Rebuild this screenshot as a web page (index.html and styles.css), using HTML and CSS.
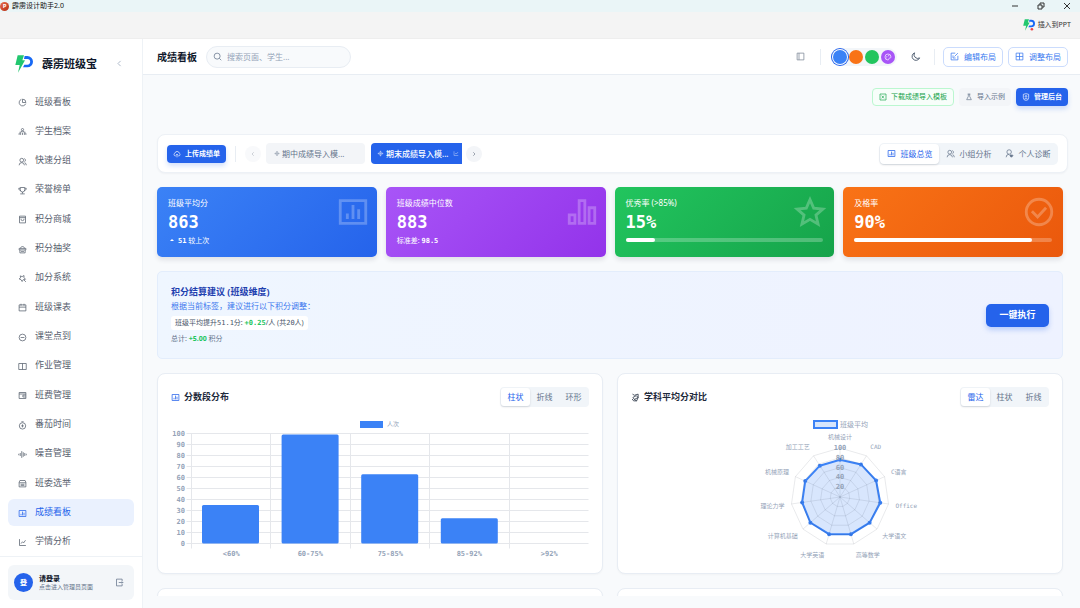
FILE: index.html
```
<!DOCTYPE html>
<html lang="zh-CN">
<head>
    <meta charset="UTF-8">
    <meta name="viewport" content="width=device-width, initial-scale=1.0">
    <title>霹雳班级宝 - 成绩看板</title>
    <link rel="stylesheet" href="styles.css">
</head>
<body>
    <svg class="sprite" aria-hidden="true">
        <symbol id="i-pie" viewBox="0 0 24 24"><path d="M9 3.600A9 9 0 1 0 20.600 15M12 3v9h9a9 9 0 0 0-9-9z"/></symbol>
        <symbol id="i-team" viewBox="0 0 24 24"><circle cx="12" cy="7" r="3"/><path d="M7 21v-5a5 5 0 0 1 10 0v5M12 21v-6M3 21v-3a3 3 0 0 1 3-3M21 21v-3a3 3 0 0 0-3-3M5 11.500h1M18 11.500h1"/></symbol>
        <symbol id="i-group" viewBox="0 0 24 24"><circle cx="10" cy="8.500" r="5"/><path d="M3 22a7 7 0 0 1 14 0M17 4a5 5 0 0 1 0 9M18 15a7 7 0 0 1 4 7"/></symbol>
        <symbol id="i-trophy" viewBox="0 0 24 24"><path d="M6 4h12v6a6 6 0 0 1-12 0zM6 6H2c0 4 2 6 5 6M18 6h4c0 4-2 6-5 6M12 16v4M6 21h12"/></symbol>
        <symbol id="i-shop" viewBox="0 0 24 24"><path d="M4 3h16v18H4zM4 7h16M8 10v1a4 4 0 0 0 8 0v-1"/></symbol>
        <symbol id="i-gift" viewBox="0 0 24 24"><path d="M3 9h18v4H3zM5 13v8h14v-8M8 17h8M7 9c0-3 2-5 5-5s5 2 5 5"/></symbol>
        <symbol id="i-magic" viewBox="0 0 24 24"><path d="M6 5l5 2 5-3 0 6 4 4-6 1-3 5-3-5-5-2 4-3zM16 16l5 5"/></symbol>
        <symbol id="i-calendar" viewBox="0 0 24 24"><path d="M3 5h18v16H3zM3 11h18M8 2v5M16 2v5"/></symbol>
        <symbol id="i-check" viewBox="0 0 24 24"><circle cx="12" cy="12" r="9"/><path d="M7 12h10"/></symbol>
        <symbol id="i-book" viewBox="0 0 24 24"><path d="M2 4h20v16H2zM12 4v16"/></symbol>
        <symbol id="i-wallet" viewBox="0 0 24 24"><path d="M3 4h18v16H3zM3 8h18M21 11h-8v5h8"/></symbol>
        <symbol id="i-timer" viewBox="0 0 24 24"><circle cx="12" cy="13" r="8.500"/><path d="M9 2h6M12 9v8M8.500 13h7"/></symbol>
        <symbol id="i-noise" viewBox="0 0 24 24"><path d="M2 10v4M6 8v8M10 3v18M14 6v12M18 8v8M22 10v4"/></symbol>
        <symbol id="i-vote" viewBox="0 0 24 24"><path d="M5 4h14l2 5v12H3V9zM3 10h18M7 14h10M7 17h10"/></symbol>
        <symbol id="i-chart-box" viewBox="0 0 24 24"><path d="M3 4h18v16H3zM8 13v4M12 7v10M16 10v7"/></symbol>
        <symbol id="i-bars" viewBox="0 0 24 24"><path d="M3 14h4v6H3zM10 4h4v16h-4zM17 9h4v11h-4z"/></symbol>
        <symbol id="i-trend" viewBox="0 0 24 24"><path d="M4 3v17h17M8 15l4-5 3 3 5-7"/></symbol>
        <symbol id="i-star" viewBox="0 0 24 24"><path d="M12 3.300l2.600 6 6.500.6-4.900 4.300 1.500 6.400L12 17.200l-5.700 3.400 1.500-6.400-4.900-4.300 6.500-.6z"/></symbol>
        <symbol id="i-ok" viewBox="0 0 24 24"><circle cx="12" cy="12" r="9"/><path d="M7 11.500l4 4 6-6.500"/></symbol>
        <symbol id="i-exit" viewBox="0 0 24 24"><path d="M19 8V3H4v18h15v-5M10 12h11M18 9l3 3-3 3"/></symbol>
        <symbol id="i-left" viewBox="0 0 24 24"><path d="M15 5l-7 7 7 7"/></symbol>
        <symbol id="i-right" viewBox="0 0 24 24"><path d="M9 5l7 7-7 7"/></symbol>
        <symbol id="i-search" viewBox="0 0 24 24"><circle cx="11" cy="11" r="8"/><path d="M17 17l5 5"/></symbol>
        <symbol id="i-panel" viewBox="0 0 24 24"><path d="M3 3h18v18H3zM8 3v18"/></symbol>
        <symbol id="i-moon" viewBox="0 0 24 24"><path d="M10 4a8.500 8.500 0 1 0 11 11A8 8 0 0 1 10 4z"/></symbol>
        <symbol id="i-edit" viewBox="0 0 24 24"><path d="M14 3H3v18h18V10M12 12l9-9M8 9v7h7"/></symbol>
        <symbol id="i-grid" viewBox="0 0 24 24"><path d="M3 3h18v18H3zM3 12h18M12 3v18"/></symbol>
        <symbol id="i-palette" viewBox="0 0 24 24"><path d="M12 3a9 9 0 1 0 0 18c3 0 1-3 3-5s6 0 6-4a9 9 0 0 0-9-9zM7 11h3M12 8h4M7 15h2"/></symbol>
        <symbol id="i-excel" viewBox="0 0 24 24"><path d="M3 3h18v18H3zM8 8l7 8M15 8l-7 8"/></symbol>
        <symbol id="i-flask" viewBox="0 0 24 24"><path d="M8 3h8M10 3v7L5 20h14l-5-10V3"/></symbol>
        <symbol id="i-shield" viewBox="0 0 24 24"><path d="M12 2l8 2v10a8 8 0 0 1-16 0V4z"/><circle cx="12" cy="10" r="2.500"/><path d="M8 16h8"/></symbol>
        <symbol id="i-cloud" viewBox="0 0 24 24"><path d="M8 18H6a5 5 0 0 1 0-9 6.500 6.500 0 0 1 12.500 0A5 5 0 0 1 18 18h-2M12 22v-9M8.500 16l3.500-3.500 3.500 3.500"/></symbol>
        <symbol id="i-person" viewBox="0 0 24 24"><circle cx="11" cy="8" r="6"/><path d="M3 22a8 8 0 0 1 8-8"/><path d="M17 22l-3.500-3.500a2 2 0 0 1 3.500-2 2 2 0 0 1 3.500 2z" fill="currentColor"/></symbol>
        <symbol id="i-mark" viewBox="0 0 24 24"><path d="M12 3l3 6 6 3-6 3-3 6-3-6-6-3 6-3zM12 3v18M3 12h18"/></symbol>
        <symbol id="i-radar" viewBox="0 0 24 24"><path d="M4 3l5 3 10-3v9l-4 9H7l-4-5M5 12l9-5 5 5-10 5zM9 17l6 4"/></symbol>
        <symbol id="logo" viewBox="0 0 54 54">
            <path fill="#22c76f" d="M8 1h19l-5 15h8L9 53l5-23H1z"/>
            <path fill="#1769f5" d="M29 3h8a16 16 0 0 1 0 34H24l4-8h9a8 8 0 0 0 0-17H27z"/>
        </symbol>
    </svg>

    <div class="window">
        <div class="titlebar">
            <span class="ppt-icon">P</span>
            <span class="titlebar-text">霹雳设计助手2.0</span>
            <div class="window-controls">
                <button aria-label="最小化"><svg viewBox="0 0 10 10"><path d="M2 5h6"/></svg></button>
                <button aria-label="还原"><svg viewBox="0 0 10 10"><path d="M2 4h4v4H2zM4 4V2h4v4H6"/></svg></button>
                <button aria-label="关闭"><svg viewBox="0 0 10 10"><path d="M2 2l6 6M8 2L2 8"/></svg></button>
            </div>
        </div>
        <div class="ribbon">
            <button class="insert-btn">
                <svg class="insert-logo" viewBox="0 0 54 54"><use href="#logo"/><circle cx="40" cy="46" r="6" fill="#ef4444"/></svg>
                插入到PPT
            </button>
        </div>

        <div class="app">
            <aside class="sidebar">
                <div class="brand">
                    <svg class="brand-logo"><use href="#logo"/></svg>
                    <span class="brand-name">霹雳班级宝</span>
                    <button class="collapse" aria-label="收起"><svg class="icon"><use href="#i-left"/></svg></button>
                </div>
                <nav class="nav">
                    <a href="#"><svg class="icon"><use href="#i-pie"/></svg>班级看板</a>
                    <a href="#"><svg class="icon"><use href="#i-team"/></svg>学生档案</a>
                    <a href="#"><svg class="icon"><use href="#i-group"/></svg>快速分组</a>
                    <a href="#"><svg class="icon"><use href="#i-trophy"/></svg>荣誉榜单</a>
                    <a href="#"><svg class="icon"><use href="#i-shop"/></svg>积分商城</a>
                    <a href="#"><svg class="icon"><use href="#i-gift"/></svg>积分抽奖</a>
                    <a href="#"><svg class="icon"><use href="#i-magic"/></svg>加分系统</a>
                    <a href="#"><svg class="icon"><use href="#i-calendar"/></svg>班级课表</a>
                    <a href="#"><svg class="icon"><use href="#i-check"/></svg>课堂点到</a>
                    <a href="#"><svg class="icon"><use href="#i-book"/></svg>作业管理</a>
                    <a href="#"><svg class="icon"><use href="#i-wallet"/></svg>班费管理</a>
                    <a href="#"><svg class="icon"><use href="#i-timer"/></svg>番茄时间</a>
                    <a href="#"><svg class="icon"><use href="#i-noise"/></svg>噪音管理</a>
                    <a href="#"><svg class="icon"><use href="#i-vote"/></svg>班委选举</a>
                    <a href="#" class="active"><svg class="icon"><use href="#i-chart-box"/></svg>成绩看板</a>
                    <a href="#"><svg class="icon"><use href="#i-trend"/></svg>学情分析</a>
                </nav>
                <div class="sidebar-footer">
                    <div class="user-card">
                        <span class="avatar">登</span>
                        <div class="user-info">
                            <strong>请登录</strong>
                            <span>点击进入管理员页面</span>
                        </div>
                        <button class="logout" aria-label="退出"><svg class="icon"><use href="#i-exit"/></svg></button>
                    </div>
                </div>
            </aside>

            <div class="main">
                <header class="topbar">
                    <h1>成绩看板</h1>
                    <label class="search">
                        <svg class="icon"><use href="#i-search"/></svg>
                        <input type="text" placeholder="搜索页面、学生..." aria-label="搜索">
                    </label>
                    <div class="topbar-right">
                        <button class="icon-btn" aria-label="侧栏"><svg class="icon"><use href="#i-panel"/></svg></button>
                        <span class="divider"></span>
                        <div class="themes">
                            <button class="dot blue selected" aria-label="蓝色"></button>
                            <button class="dot orange" aria-label="橙色"></button>
                            <button class="dot green" aria-label="绿色"></button>
                            <button class="dot purple" aria-label="自定义"><svg class="icon"><use href="#i-palette"/></svg></button>
                        </div>
                        <button class="icon-btn moon" aria-label="深色模式"><svg class="icon"><use href="#i-moon"/></svg></button>
                        <span class="divider"></span>
                        <button class="layout-btn"><svg class="icon"><use href="#i-edit"/></svg>编辑布局</button>
                        <button class="layout-btn"><svg class="icon"><use href="#i-grid"/></svg>调整布局</button>
                    </div>
                </header>

                <main class="content">
                    <div class="actions">
                        <button class="btn btn-outline"><svg class="icon"><use href="#i-excel"/></svg>下载成绩导入模板</button>
                        <button class="btn btn-gray"><svg class="icon"><use href="#i-flask"/></svg>导入示例</button>
                        <button class="btn btn-primary"><svg class="icon"><use href="#i-shield"/></svg>管理后台</button>
                    </div>

                    <div class="toolbar">
                        <button class="btn btn-primary"><svg class="icon"><use href="#i-cloud"/></svg>上传成绩单</button>
                        <span class="divider"></span>
                        <button class="round faded" aria-label="上一个"><svg class="icon"><use href="#i-left"/></svg></button>
                        <div class="exams">
                            <button class="exam"><svg class="icon"><use href="#i-mark"/></svg>期中成绩导入模...</button>
                            <button class="exam active"><svg class="icon"><use href="#i-mark"/></svg>期末成绩导入模...<svg class="icon"><use href="#i-trend"/></svg></button>
                        </div>
                        <button class="round" aria-label="下一个"><svg class="icon"><use href="#i-right"/></svg></button>
                        <div class="views">
                            <button class="active"><svg class="icon"><use href="#i-chart-box"/></svg>班级总览</button>
                            <button><svg class="icon"><use href="#i-group"/></svg>小组分析</button>
                            <button><svg class="icon"><use href="#i-person"/></svg>个人诊断</button>
                        </div>
                    </div>

                    <div class="scroll">
                        <section class="stats">
                            <div class="stat stat-blue">
                                <div class="stat-label">班级平均分</div>
                                <div class="stat-value">863</div>
                                <div class="stat-sub"><i class="up"></i><b>51</b> 较上次</div>
                                <svg class="icon"><use href="#i-chart-box"/></svg>
                            </div>
                            <div class="stat stat-purple">
                                <div class="stat-label">班级成绩中位数</div>
                                <div class="stat-value">883</div>
                                <div class="stat-sub">标准差: <b>98.5</b></div>
                                <svg class="icon"><use href="#i-bars"/></svg>
                            </div>
                            <div class="stat stat-green">
                                <div class="stat-label">优秀率 (&gt;85%)</div>
                                <div class="stat-value">15%</div>
                                <div class="progress"><div style="width: 15%"></div></div>
                                <svg class="icon"><use href="#i-star"/></svg>
                            </div>
                            <div class="stat stat-orange">
                                <div class="stat-label">及格率</div>
                                <div class="stat-value">90%</div>
                                <div class="progress"><div style="width: 90%"></div></div>
                                <svg class="icon"><use href="#i-ok"/></svg>
                            </div>
                        </section>

                        <section class="advice">
                            <div>
                                <h2>积分结算建议 (班级维度)</h2>
                                <p class="advice-text">根据当前标签，建议进行以下积分调整：</p>
                                <div class="chip">班级平均提升<b>51.1</b>分: <b class="plus">+0.25</b>/人 (共<b>20</b>人)</div>
                                <p class="total">总计: <strong class="plus">+5.00</strong> 积分</p>
                            </div>
                            <button class="run-btn">一键执行</button>
                        </section>

                        <section class="charts">
                            <div class="card">
                                <div class="card-head">
                                    <svg class="icon blue-icon"><use href="#i-chart-box"/></svg>
                                    <h3>分数段分布</h3>
                                    <div class="switch">
                                        <button class="active">柱状</button>
                                        <button>折线</button>
                                        <button>环形</button>
                                    </div>
                                </div>
                                <svg class="chart" id="barChart" viewBox="0 0 418 147"></svg>
                            </div>
                            <div class="card">
                                <div class="card-head">
                                    <svg class="icon"><use href="#i-radar"/></svg>
                                    <h3>学科平均分对比</h3>
                                    <div class="switch">
                                        <button class="active">雷达</button>
                                        <button>柱状</button>
                                        <button>折线</button>
                                    </div>
                                </div>
                                <svg class="chart" id="radarChart" viewBox="0 0 418 147"></svg>
                            </div>
                            <div class="card"></div>
                            <div class="card"></div>
                        </section>
                    </div>
                </main>
            </div>
        </div>
    </div>
    <script src="script.js"></script>
</body>
</html>
```
FILE: styles.css
```
* {
    box-sizing: border-box;
}
body {
    margin: 0;
    font-family: "Noto Sans", "Noto Sans CJK SC", sans-serif;
    font-size: 8px;
    line-height: 12px;
    color: #1e293b;
    background: #f8fafc;
}
h1, h2, h3, p {
    margin: 0;
}
button, input {
    font: inherit;
    color: inherit;
    border: none;
    background: none;
    padding: 0;
    margin: 0;
    outline: none;
}
button {
    cursor: pointer;
    display: flex;
    align-items: center;
    justify-content: center;
    white-space: nowrap;
}
a {
    color: inherit;
    text-decoration: none;
}
.sprite {
    display: none;
}
.icon {
    width: 9px;
    height: 9px;
    flex: none;
    fill: none;
    stroke: currentColor;
    stroke-width: 2;
}
.divider {
    width: 1px;
    height: 16px;
    background: #e8edf3;
}
b {
    font-family: "DejaVu Sans Mono", monospace;
}

/* window chrome */
.window {
    height: 100vh;
    display: flex;
    flex-direction: column;
}
.titlebar {
    height: 12px;
    flex: none;
    display: flex;
    align-items: center;
    background: #eaf5f7;
    font-size: 7px;
}
.ppt-icon {
    width: 9px;
    height: 9px;
    line-height: 9px;
    font-size: 6px;
    font-weight: bold;
    text-align: center;
    color: white;
    border-radius: 50%;
    background: linear-gradient(135deg, #e8704f, #b52b12);
}
.titlebar-text {
    margin-left: 3px;
    color: #111;
}
.window-controls {
    display: flex;
    gap: 16px;
    margin-left: auto;
    margin-right: 8px;
}
.window-controls svg {
    width: 10px;
    height: 10px;
    fill: none;
    stroke: #333;
}
.ribbon {
    height: 27px;
    flex: none;
    display: flex;
    align-items: center;
    justify-content: flex-end;
    padding-right: 9px;
    background: #f4f4f4;
    border-bottom: 1px solid #eeeeee;
}
.insert-btn {
    font-size: 7px;
    gap: 3px;
    color: #333;
}
.insert-logo {
    width: 12px;
    height: 12px;
}
.app {
    flex: 1;
    min-height: 0;
    display: flex;
}

/* sidebar */
.sidebar {
    width: 143px;
    flex: none;
    display: flex;
    flex-direction: column;
    background: white;
    border-right: 1px solid #eef2f6;
}
.brand {
    height: 49px;
    flex: none;
    display: flex;
    align-items: center;
    padding: 0 18px 0 15px;
}
.brand-logo {
    width: 18px;
    height: 18px;
}
.brand-name {
    margin-left: 9px;
    font-size: 11px;
    font-weight: bold;
    color: #0f172a;
}
.collapse {
    margin-left: auto;
    color: #94a3b8;
}
.nav {
    flex: 1;
    display: flex;
    flex-direction: column;
    justify-content: space-between;
    padding: 0 8px;
}
.nav a {
    height: 27px;
    display: flex;
    align-items: center;
    gap: 8px;
    padding-left: 10px;
    border-radius: 6px;
    font-size: 9px;
    color: #57606e;
}
.nav .icon {
    margin-top: 2px;
}
.nav a.active {
    background: #eaf1fe;
    color: #2563eb;
}
.sidebar-footer {
    margin-top: 1px;
    padding: 8px;
    border-top: 1px solid #eef2f6;
}
.user-card {
    height: 35px;
    display: flex;
    align-items: center;
    padding: 0 10px 0 6px;
    border-radius: 6px;
    background: #f3f6f9;
}
.avatar {
    width: 19px;
    height: 19px;
    line-height: 19px;
    border-radius: 50%;
    background: #2563eb;
    color: white;
    font-size: 7px;
    font-weight: bold;
    text-align: center;
}
.user-info {
    margin-left: 6px;
    line-height: 8px;
    font-size: 6px;
    color: #64748b;
}
.user-info strong {
    display: block;
    font-size: 7px;
    color: #0f172a;
}
.user-info span {
    display: block;
}
.logout {
    margin-left: auto;
    color: #64748b;
}

/* top bar */
.main {
    flex: 1;
    min-width: 0;
    display: flex;
    flex-direction: column;
}
.topbar {
    height: 36px;
    flex: none;
    display: flex;
    align-items: center;
    padding: 0 12px 0 14px;
    background: white;
    border-bottom: 1px solid #e8edf3;
}
.topbar h1 {
    font-size: 10px;
    color: #0f172a;
}
.search {
    width: 145px;
    height: 22px;
    display: flex;
    align-items: center;
    gap: 5px;
    margin-left: 9px;
    padding: 0 6px;
    border: 1px solid #e8edf3;
    border-radius: 11px;
    background: #f8fafc;
    color: #64748b;
}
.search input {
    flex: 1;
    min-width: 0;
}
.search input::placeholder {
    color: #94a3b8;
}
.topbar-right {
    display: flex;
    align-items: center;
    margin-left: auto;
}
.icon-btn {
    margin-right: 15px;
    color: #7c8796;
}
.themes {
    display: flex;
    gap: 2px;
    margin-left: 10px;
    padding: 2px;
    border-radius: 12px;
    background: #f3f6f9;
}
.dot {
    width: 14px;
    height: 14px;
    border-radius: 50%;
}
.dot.selected {
    box-shadow: 0 0 0 1px white, 0 0 0 2px #2563eb;
}
.dot .icon {
    width: 8px;
    height: 8px;
    color: white;
}
.blue {
    background: #3b82f6;
}
.orange {
    background: #f97316;
}
.green {
    background: #22c55e;
}
.purple {
    background: #a855f7;
}
.moon {
    margin: 0 13px;
    color: #475569;
}
.moon .icon {
    width: 11px;
    height: 11px;
}
.layout-btn {
    width: 60px;
    height: 20px;
    gap: 5px;
    margin-left: 5px;
    border: 1px solid #cbdcfd;
    border-radius: 5px;
    color: #3b7af0;
}
.divider + .layout-btn {
    margin-left: 8px;
}

/* content */
.content {
    flex: 1;
    min-height: 0;
    display: flex;
    flex-direction: column;
    padding: 13px 12px 12px 14px;
}
.actions {
    display: flex;
    justify-content: flex-end;
    gap: 5px;
    margin-bottom: 28px;
}
.btn {
    height: 18px;
    gap: 4px;
    padding: 0 6px;
    border-radius: 4px;
    font-size: 7px;
    flex: none;
}
.btn .icon {
    width: 8px;
    height: 8px;
}
.btn-outline {
    border: 1px solid #bbf7d0;
    background: #f7fefa;
    color: #16a34a;
}
.btn-gray {
    background: #f3f5f8;
    color: #64748b;
}
.btn-primary {
    background: #2563eb;
    color: white;
    font-weight: bold;
    box-shadow: 0 3px 5px rgba(37, 99, 235, 0.2);
}
.toolbar {
    height: 39px;
    flex: none;
    display: flex;
    align-items: center;
    padding: 0 9px;
    border: 1px solid #edf1f6;
    border-radius: 8px;
    background: white;
    box-shadow: 0 1px 2px rgba(15, 23, 42, 0.04);
}
.toolbar .divider {
    margin: 0 9px;
}
.round {
    width: 16px;
    height: 16px;
    border-radius: 50%;
    background: #f3f5f8;
    color: #475569;
}
.round .icon {
    width: 6px;
    height: 6px;
}
.faded {
    opacity: 0.5;
}
.exams {
    width: 196px;
    display: flex;
    gap: 6px;
    margin: 0 4px 0 5px;
    overflow: hidden;
}
.exam {
    width: 99px;
    height: 21px;
    flex: none;
    justify-content: flex-start;
    gap: 2px;
    padding-left: 6px;
    border-radius: 4px;
    background: #f3f5f8;
    color: #64748b;
}
.exam .icon {
    width: 7px;
    height: 7px;
    opacity: 0.7;
}
.exam .icon:last-child {
    width: 6px;
    margin-left: 2px;
}
.exam.active {
    background: #2563eb;
    color: white;
    font-weight: 500;
}
.views {
    display: flex;
    margin-left: auto;
    padding: 1px;
    border-radius: 5px;
    background: #f1f5f9;
    color: #64748b;
}
.views button {
    width: 59px;
    height: 20px;
    gap: 5px;
    border-radius: 4px;
}
.views .active,
.switch .active {
    background: white;
    color: #2563eb;
    box-shadow: 0 1px 2px rgba(15, 23, 42, 0.15);
}
.scroll {
    flex: 1;
    min-height: 0;
    overflow: hidden;
    margin: 0 -12px 0 -14px;
    padding: 14px 17px 0 14px;
}

/* stat cards */
.stats {
    display: grid;
    grid-template-columns: repeat(4, 1fr);
    gap: 9px;
}
.stat {
    position: relative;
    height: 70px;
    padding: 10px 11px;
    border-radius: 5px;
    color: white;
    box-shadow: 0 3px 5px rgba(15, 23, 42, 0.1);
}
.stat-blue {
    background: linear-gradient(135deg, #3b82f6, #2563eb);
}
.stat-purple {
    background: linear-gradient(135deg, #a855f7, #9333ea);
}
.stat-green {
    background: linear-gradient(135deg, #22c55e, #16a34a);
}
.stat-orange {
    background: linear-gradient(135deg, #f97316, #ea580c);
}
.stat-value {
    margin: 3px 0;
    font-family: "DejaVu Sans Mono", monospace;
    font-size: 17px;
    line-height: 20px;
    font-weight: bold;
}
.stat-sub {
    font-size: 7px;
}
.up {
    display: inline-block;
    margin: 0 4px 2px 2px;
    border: 2px solid transparent;
    border-top: none;
    border-bottom-color: white;
}
.stat > .icon {
    position: absolute;
    top: 8px;
    right: 7px;
    width: 34px;
    height: 34px;
    opacity: 0.25;
}
.progress {
    height: 4px;
    margin-top: 6px;
    border-radius: 2px;
    background: rgba(255, 255, 255, 0.25);
}
.progress div {
    height: 4px;
    border-radius: 2px;
    background: white;
}

/* advice */
.advice {
    display: flex;
    align-items: center;
    justify-content: space-between;
    margin: 14px 0;
    padding: 13px;
    border: 1px solid #e3edfc;
    border-radius: 5px;
    background: linear-gradient(90deg, #eff6ff, #eef2ff);
}
.advice h2 {
    font-size: 9px;
    line-height: 14px;
    color: #1e40af;
}
.advice-text {
    line-height: 14px;
    color: #3b76ee;
}
.chip {
    display: inline-block;
    margin-top: 3px;
    padding: 1px 4px;
    border-radius: 3px;
    background: white;
    font-size: 7px;
    color: #475569;
}
.chip b {
    font-weight: normal;
}
.chip .plus {
    font-weight: bold;
}
.plus {
    color: #22c55e;
}
.total {
    font-size: 7px;
    margin-top: 3px;
    color: #64748b;
}
.run-btn {
    width: 63px;
    height: 23px;
    border-radius: 5px;
    background: #2563eb;
    color: white;
    font-size: 9px;
    font-weight: bold;
    box-shadow: 0 3px 5px rgba(37, 99, 235, 0.25);
}

/* charts */
.charts {
    display: grid;
    grid-template-columns: 1fr 1fr;
    gap: 14px;
}
.card {
    min-height: 60px;
    padding: 13px;
    border: 1px solid #e8edf4;
    border-radius: 8px;
    background: white;
    box-shadow: 0 1px 2px rgba(15, 23, 42, 0.03);
}
.card-head {
    display: flex;
    align-items: center;
    gap: 4px;
    margin-bottom: 6px;
}
.card-head h3 {
    font-size: 9px;
    color: #1e293b;
}
.blue-icon {
    color: #2563eb;
}
.switch {
    display: flex;
    margin-left: auto;
    padding: 1px;
    border-radius: 4px;
    background: #f1f5f9;
    color: #64748b;
}
.switch button {
    width: 29px;
    height: 18px;
    border-radius: 3px;
}
.chart {
    display: block;
    width: 100%;
    height: auto;
}
.chart text {
    font-family: "DejaVu Sans Mono", "Noto Sans CJK SC", monospace;
    font-size: 7px;
    fill: #94a3b8;
}
.chart .small {
    font-size: 6px;
}
.chart .tick {
    font-weight: bold;
}
.chart .line {
    fill: none;
    stroke: #e5e7eb;
}
.chart .thin {
    fill: none;
    stroke: rgba(15, 23, 42, 0.09);
    stroke-width: 1;
}
```
FILE: script.js
```
function text(x, y, value, anchor, cls) {
    return `<text x="${x}" y="${y}" text-anchor="${anchor}" class="${cls}">${value}</text>`;
}

function drawBars() {
    const labels = ['&lt;60%', '60-75%', '75-85%', '85-92%', '&gt;92%'];
    const values = [35, 99, 63, 23, 0];
    const left = 19.5, right = 417.5, bottom = 130.5, height = 110;
    const step = (right - left) / labels.length;
    let out = '<rect x="189" y="8" width="23" height="7" fill="#3b82f6"/>';
    out += text(216, 13, '人次', 'start', 'small');

    for (let i = 0; i <= 10; i++) {
        const y = bottom - i * height / 10;
        out += `<path class="line" d="M${left - 4} ${y}H${right}"/>`;
        out += text(14, y + 2, i * 10, 'end', 'tick');
    }
    labels.forEach((label, i) => {
        const x = Math.round(left + i * step) + 0.5;
        out += `<path class="line" d="M${x} ${bottom - height}V${bottom + 5}"/>`;
        out += text(x + step / 2, 143, label, 'middle', 'tick');
    });
    values.forEach((value, i) => {
        const h = value * height / 100;
        if (h) {
            out += `<rect x="${left + i * step + 11.5}" y="${bottom - h}" width="57" height="${h}" rx="1.5" fill="#3b82f6"/>`;
        }
    });
    document.getElementById('barChart').innerHTML = out;
}

function drawRadar() {
    const labels = ['机械设计', 'CAD', 'C语言', 'Office', '大学语文', '高等数学', '大学英语', '计算机基础', '理论力学', '机械原理', '加工工艺'];
    const values = [76, 79, 81, 83, 80, 79, 79, 80, 78, 78, 76];
    const cx = 209, cy = 84, radius = 49;
    const point = (i, r) => {
        const a = i * 2 * Math.PI / labels.length;
        return [cx + r * Math.sin(a), cy - r * Math.cos(a)];
    };
    const ring = r => labels.map((l, i) => point(i, r).join()).join(' ');
    let out = '<rect x="183" y="8" width="23" height="7" fill="#d6e5fc" stroke="#3b82f6" stroke-width="2"/>';
    out += text(209, 14, '班级平均', 'start', '');

    const shape = values.map((v, i) => point(i, v * radius / 100));
    out += `<polygon points="${shape.join(' ')}" fill="#3b82f6" fill-opacity="0.2" stroke="#3b82f6" stroke-width="2"/>`;
    shape.forEach(p => {
        out += `<circle cx="${p[0]}" cy="${p[1]}" r="2" fill="#3b82f6"/>`;
    });
    for (let i = 1; i <= 5; i++) {
        out += `<polygon class="thin" points="${ring(radius * i / 5)}"/>`;
        out += text(cx, cy - radius * i / 5 + 2, i * 20, 'middle', 'tick');
    }
    labels.forEach((label, i) => {
        const end = point(i, radius);
        const pos = point(i, 60);
        const side = Math.sin(i * 2 * Math.PI / labels.length);
        const anchor = Math.abs(side) < 0.1 ? 'middle' : side > 0 ? 'start' : 'end';
        out += `<path class="thin" d="M${cx} ${cy}L${end}"/>`;
        out += text(anchor === 'middle' ? cx : pos[0] - side * 4, pos[1] + 2, label, anchor, 'small');
    });
    document.getElementById('radarChart').innerHTML = out;
}

drawBars();
drawRadar();
```
